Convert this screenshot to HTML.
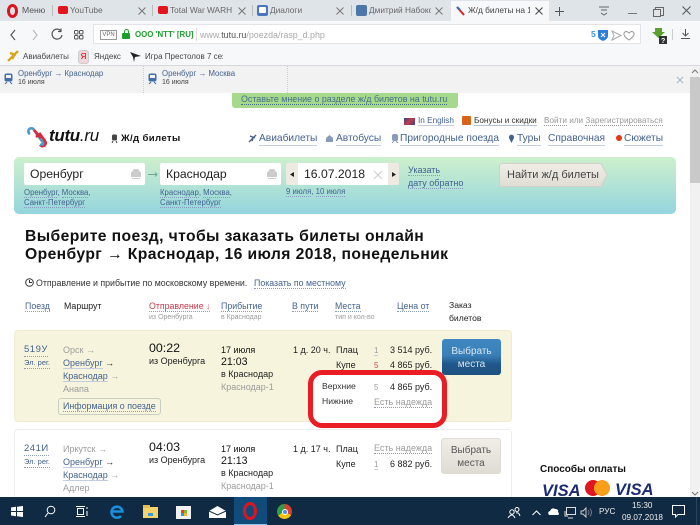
<!DOCTYPE html>
<html><head><meta charset="utf-8">
<style>
html,body{margin:0;padding:0;width:700px;height:525px;overflow:hidden;background:#fff}
body{position:relative;font-family:"Liberation Sans","Noto Sans CJK SC",sans-serif;font-size:10px;color:#222}
.a{position:absolute;white-space:nowrap;line-height:1.15}
.b{position:absolute}
.l{color:#44628f}
.u{border-bottom:1px solid #c3cde0}
.d{border-bottom:1px dotted #8a9dbd}
.g{color:#9c9c9c}
svg{position:absolute;overflow:visible}
</style></head><body>
<!-- chrome backgrounds -->
<div class="b" style="left:0;top:0;width:700px;height:21px;background:#dfe4e9"></div>
<div class="b" style="left:0;top:21px;width:700px;height:45px;background:#f7f8fa"></div>
<div class="b" style="left:0;top:65px;width:700px;height:1px;background:#d5d7da"></div>
<div class="b" style="left:451px;top:1px;width:98px;height:21px;background:#f7f8fa"></div>
<div class="b" style="left:93px;top:24px;width:548px;height:20px;background:#fff;border:1px solid #e2e4e7;box-sizing:border-box"></div>

<!-- tabs -->
<div class="b" style="left:7px;top:4px;border:3px solid #d8161e;border-radius:50%;width:5px;height:8px"></div>
<div class="a" style="left:22px;top:6px;font-size:8.6px;color:#555">Меню</div>
<div class="b" style="left:52px;top:5px;width:1px;height:11px;background:#bbb"></div>
<div class="b" style="left:58px;top:6px;width:10px;height:8px;background:#e4141e;border-radius:2px"></div>
<div class="a" style="left:70px;top:6px;font-size:8.3px;color:#666">YouTube</div>
<svg style="left:138px;top:7px" width="8" height="8" stroke="#777"><path d="M.5 .5L7.5 7.5M7.5 .5L.5 7.5"/></svg>
<div class="b" style="left:152px;top:5px;width:1px;height:11px;background:#bbb"></div>
<div class="b" style="left:158px;top:6px;width:10px;height:8px;background:#e4141e;border-radius:2px"></div>
<div class="a" style="left:170px;top:6px;font-size:8.3px;color:#666;width:62px;overflow:hidden">Total War WARHAMMER</div>
<svg style="left:238px;top:7px" width="8" height="8" stroke="#777"><path d="M.5 .5L7.5 7.5M7.5 .5L.5 7.5"/></svg>
<div class="b" style="left:252px;top:5px;width:1px;height:11px;background:#bbb"></div>
<div class="b" style="left:257px;top:5px;width:11px;height:11px;background:#4a76c0;border-radius:2px"></div>
<div class="b" style="left:259px;top:7px;width:7px;height:6px;background:#fff;border-radius:1px"></div>
<div class="a" style="left:270px;top:6px;font-size:8.3px;color:#666">Диалоги</div>
<svg style="left:336px;top:7px" width="8" height="8" stroke="#777"><path d="M.5 .5L7.5 7.5M7.5 .5L.5 7.5"/></svg>
<div class="b" style="left:351px;top:5px;width:1px;height:11px;background:#bbb"></div>
<div class="b" style="left:356px;top:5px;width:11px;height:11px;background:#4a76a8;border-radius:2px"></div>
<div class="a" style="left:369px;top:6px;font-size:8.3px;color:#666;width:62px;overflow:hidden">Дмитрий Набоков</div>
<svg style="left:435px;top:7px" width="8" height="8" stroke="#777"><path d="M.5 .5L7.5 7.5M7.5 .5L.5 7.5"/></svg>
<svg style="left:456px;top:6px" width="10" height="10"><path d="M1 1L8 9" stroke="#d22" stroke-width="2"/><path d="M1 1L4 4" stroke="#2a6ebb" stroke-width="2"/></svg>
<div class="a" style="left:468px;top:6px;font-size:8.3px;color:#444;width:62px;overflow:hidden">Ж/д билеты на 1</div>
<svg style="left:535px;top:7px" width="8" height="8" stroke="#444"><path d="M.5 .5L7.5 7.5M7.5 .5L.5 7.5"/></svg>
<svg style="left:555px;top:7px" width="9" height="9" stroke="#555"><path d="M4.5 0V9M0 4.5H9"/></svg>
<svg style="left:598px;top:6px" width="12" height="10"><path d="M1 1H11M3 4H9M3 7L6 9L9 7" stroke="#666" fill="none"/></svg>
<div class="b" style="left:628px;top:13px;width:9px;height:1px;background:#777"></div>
<div class="b" style="left:655px;top:7px;width:7px;height:7px;border:1px solid #666;background:#dfe4e9"></div>
<div class="b" style="left:653px;top:9px;width:6px;height:6px;border:1px solid #666;background:#dfe4e9"></div>
<svg style="left:682px;top:6px" width="9" height="9" stroke="#555"><path d="M.5 .5L8.5 8.5M8.5 .5L.5 8.5"/></svg>

<!-- toolbar -->
<svg style="left:10px;top:28px" width="60" height="14" fill="none" stroke="#555"><path d="M5 2L1 7L5 12" stroke-width="1.2"/><path d="M23 2L27 7L23 12" stroke="#bbb" stroke-width="1.2"/><path d="M51 3A5 5 0 1 0 52 7M51 .5V3.5H48" stroke-width="1.2"/></svg>
<svg style="left:74px;top:30px" width="10" height="10" fill="none" stroke="#555"><rect x=".5" y=".5" width="3.5" height="3.5" rx="1"/><rect x="5.5" y=".5" width="3.5" height="3.5" rx="1"/><rect x=".5" y="5.5" width="3.5" height="3.5" rx="1"/><rect x="5.5" y="5.5" width="3.5" height="3.5" rx="1"/></svg>
<div class="a" style="left:100px;top:30px;width:15px;height:8px;border:1px solid #999;font-size:6px;color:#666;text-align:center;line-height:8px">VPN</div>
<div class="b" style="left:122px;top:33px;width:8px;height:6px;background:#1a9e2c;border-radius:1px"></div>
<div class="b" style="left:123.5px;top:29px;width:3px;height:4px;border:1.2px solid #1a9e2c;border-bottom:0;border-radius:3px 3px 0 0"></div>
<div class="a" style="left:135px;top:30px;font-size:7.9px;font-weight:bold;color:#1f9e2f">ООО 'NTT' [RU]</div>
<div class="b" style="left:196px;top:28px;width:1px;height:13px;background:#ddd"></div>
<div class="a" style="left:200px;top:30px;font-size:8.9px;color:#aaa">www.<span style="color:#555">tutu.ru</span>/poezda/rasp_d.php</div>
<div class="a" style="left:591px;top:30px;font-size:8.5px;font-weight:bold;color:#3b99e0">5</div>
<svg style="left:597px;top:29px" width="12" height="12"><path d="M1 1H11V7Q11 10 6 12Q1 10 1 7Z" fill="#2b7de0"/><path d="M4 4L8 8M8 4L4 8" stroke="#fff"/></svg>
<svg style="left:611px;top:30px" width="25" height="11" fill="none" stroke="#aaa"><path d="M1 1L10 5.5L1 10L3 5.5Z"/><path d="M13 3Q15 0 18 3Q21 0 23 3Q24 6 18 10Q12 6 13 3Z" stroke="#999"/></svg>
<svg style="left:652px;top:27px" width="16" height="18"><path d="M3 1H10V5H13L6.5 11L0 5H3Z" fill="#5aa02c"/><rect x="7" y="9" width="8" height="8" fill="#333"/><text x="9" y="16" font-size="7" font-weight="bold" fill="#fff" font-family="Liberation Sans">?</text></svg>
<div class="b" style="left:672px;top:29px;width:1px;height:11px;background:#ccc"></div>
<svg style="left:680px;top:29px" width="11" height="11" fill="none" stroke="#555"><path d="M5.5 0V7M2.5 4L5.5 7L8.5 4M1 9.5H10"/></svg>

<!-- bookmarks -->
<svg style="left:7px;top:50px" width="12" height="12"><path d="M1 11L11 1M3 3L9 5M5 9L7 6" stroke="#d9a81c" stroke-width="2.4"/></svg>
<div class="a" style="left:23px;top:52px;font-size:8px;color:#444">Авиабилеты</div>
<div class="b" style="left:78px;top:50px;width:9px;height:12px;background:#f0d6d6;border:1px solid #ccc;border-radius:3px;color:#d00;font-size:8px;text-align:center;line-height:12px">Я</div>
<div class="a" style="left:94px;top:52px;font-size:8px;color:#444">Яндекс</div>
<svg style="left:130px;top:51px" width="11" height="11"><path d="M0 1L11 5L5 6L4 11L3 6Z" fill="#222"/></svg>
<div class="a" style="left:145px;top:52px;font-size:8px;color:#444;width:78px;overflow:hidden">Игра Престолов 7 сезон</div>

<!-- info bar -->
<div class="b" style="left:0;top:66px;width:690px;height:27px;background:#f2f2f2"></div>
<div class="b" style="left:143px;top:66px;width:0;height:27px;border-left:1px dotted #ccc"></div>
<div class="b" style="left:287px;top:66px;width:0;height:27px;border-left:1px dotted #ccc"></div>
<svg style="left:4px;top:73px" width="9" height="12"><rect x="0.5" y="0.5" width="8" height="8" rx="2" fill="#3f6ea8"/><rect x="2" y="2" width="5" height="3" fill="#f2f2f2"/><path d="M1 11L3 9M8 11L6 9" stroke="#3f6ea8"/></svg>
<svg style="left:148px;top:73px" width="9" height="12"><rect x="0.5" y="0.5" width="8" height="8" rx="2" fill="#3f6ea8"/><rect x="2" y="2" width="5" height="3" fill="#f2f2f2"/><path d="M1 11L3 9M8 11L6 9" stroke="#3f6ea8"/></svg>
<div class="a l" style="left:18px;top:70px;font-size:7.8px">Оренбург → Краснодар</div>
<div class="a" style="left:18px;top:79px;font-size:7px;color:#444">16 июля</div>
<div class="a l" style="left:162px;top:70px;font-size:7.8px">Оренбург → Москва</div>
<div class="a" style="left:162px;top:79px;font-size:7px;color:#444">16 июля</div>
<svg style="left:677px;top:77px" width="6" height="6" stroke="#9bb4cc"><path d="M0 0L6 6M6 0L0 6"/></svg>

<!-- scrollbar -->
<div class="b" style="left:690px;top:66px;width:10px;height:435px;background:#f1f1f1"></div>
<div class="b" style="left:690px;top:77px;width:10px;height:106px;background:#c9c9c9"></div>
<svg style="left:691px;top:69px" width="8" height="5" fill="none" stroke="#777"><path d="M1 4L4 1L7 4"/></svg>
<svg style="left:691px;top:491px" width="8" height="5" fill="none" stroke="#777"><path d="M1 1L4 4L7 1"/></svg>

<!-- feedback pill -->
<div class="b" style="left:232px;top:93px;width:226px;height:15px;background:#a6d98b;border-radius:0 0 3px 3px"></div>
<div class="a" style="left:241px;top:94px;font-size:8.9px;color:#44708a;border-bottom:1px dotted #44708a">Оставьте мнение о разделе ж/д билетов на tutu.ru</div>

<!-- logo -->
<svg style="left:27px;top:126px" width="22" height="22" fill="none" stroke-width="2.6"><path d="M3 8A3 3 0 1 1 7 4L17 18" stroke="#4a9cc4"/><path d="M7 4L14 12" stroke="#d82a3a"/><path d="M9 11L13 8L18 15A3 3 0 1 1 13 19" stroke="#d82a3a"/><path d="M13 19L17 18" stroke="#4a9cc4"/></svg>
<div class="a" style="left:49px;top:126px;font-size:17px;font-weight:bold;font-style:italic;color:#111;letter-spacing:-.3px">tutu<span style="font-weight:normal">.ru</span></div>
<svg style="left:111px;top:134px" width="7" height="10"><rect x="1" y="0.5" width="5" height="6" rx="1.5" fill="#444"/><path d="M1 9L2 7M6 9L5 7" stroke="#444"/></svg>
<div class="a" style="left:121px;top:133px;font-size:9.6px;font-weight:bold;color:#111;letter-spacing:.35px">Ж/д билеты</div>

<div class="b" style="left:404px;top:118px;width:11px;height:7px;background:linear-gradient(135deg,#2a4a8a,#c8384a 50%,#2a4a8a)"></div>
<div class="a l u" style="left:418px;top:116px;font-size:8.2px">In English</div>
<div class="b" style="left:462px;top:116px;width:9px;height:9px;background:#d8641a;border-radius:1px"></div>
<div class="a" style="left:474px;top:116px;font-size:8.2px;color:#333;border-bottom:1px solid #b8c4d8">Бонусы и скидки</div>
<div class="a" style="left:544px;top:116px;font-size:8.2px;color:#999"><span style="border-bottom:1px dotted #999">Войти</span> или <span style="border-bottom:1px dotted #999">Зарегистрироваться</span></div>

<svg style="left:248px;top:134px" width="9" height="9"><path d="M1 8L8 1M2 2L7 4M4 7L5 4" stroke="#44628f" stroke-width="1.4"/></svg>
<div class="a l u" style="left:259px;top:133px;font-size:10.2px">Авиабилеты</div>
<svg style="left:325px;top:134px" width="9" height="10"><path d="M1 4L4.5 1L8 4V8H1Z" fill="#889bb8"/></svg>
<div class="a l u" style="left:336px;top:133px;font-size:10.2px">Автобусы</div>
<svg style="left:391px;top:133px" width="8" height="11"><rect x="1" y="1" width="6" height="7" rx="2" fill="#889bb8"/><path d="M1 10L3 8M7 10L5 8" stroke="#889bb8"/></svg>
<div class="a l u" style="left:400px;top:133px;font-size:10.2px">Пригородные поезда</div>
<svg style="left:508px;top:134px" width="7" height="10"><path d="M3.5 9L1 4A2.6 2.6 0 1 1 6 4Z" fill="#44628f"/></svg>
<div class="a l u" style="left:517px;top:133px;font-size:10.2px">Туры</div>
<div class="a l u" style="left:548px;top:133px;font-size:10.2px">Справочная</div>
<div class="b" style="left:616px;top:135px;width:6px;height:6px;background:#e8350f;border-radius:50%"></div>
<div class="a l u" style="left:624px;top:133px;font-size:10.2px">Сюжеты</div>

<!-- search panel -->
<div class="b" style="left:14px;top:157px;width:662px;height:57px;background:linear-gradient(#cdf0cc,#95d5de);border-radius:5px"></div>
<div class="b" style="left:24px;top:163px;width:121px;height:22px;background:#fff;border-radius:2px"></div>
<div class="a" style="left:30px;top:167px;font-size:12.2px;color:#222">Оренбург</div>
<svg style="left:130px;top:168px" width="12" height="11"><path d="M4 1H8L11 5V9H1V5Z" fill="#ccc"/><path d="M2 10.5H10" stroke="#ccc"/></svg>
<svg style="left:148px;top:172px" width="10" height="5" fill="none" stroke="#6fa89a"><path d="M0 2.5H9M7 .5L9 2.5L7 4.5"/></svg>
<div class="b" style="left:160px;top:163px;width:121px;height:22px;background:#fff;border-radius:2px"></div>
<div class="a" style="left:166px;top:167px;font-size:12.2px;color:#222">Краснодар</div>
<svg style="left:266px;top:168px" width="12" height="11"><path d="M4 1H8L11 5V9H1V5Z" fill="#ccc"/><path d="M2 10.5H10" stroke="#ccc"/></svg>
<div class="a l" style="left:24px;top:188px;font-size:7.8px;line-height:10px"><span class="d">Оренбург</span>, <span class="d">Москва</span>,<br><span class="d">Санкт-Петербург</span></div>
<div class="a l" style="left:160px;top:188px;font-size:7.8px;line-height:10px"><span class="d">Краснодар</span>, <span class="d">Москва</span>,<br><span class="d">Санкт-Петербург</span></div>
<div class="a l" style="left:286px;top:188px;font-size:7.8px"><span class="d">9 июля</span>, <span class="d">10 июля</span></div>
<div class="b" style="left:286px;top:163px;width:12px;height:22px;background:#eeeae2;border-radius:2px 0 0 2px"></div>
<svg style="left:290px;top:172px" width="4" height="5"><path d="M4 0V5L0 2.5Z" fill="#222"/></svg>
<div class="b" style="left:298px;top:163px;width:90px;height:22px;background:#fff"></div>
<div class="a" style="left:304px;top:167px;font-size:12.2px;color:#222">16.07.2018</div>
<svg style="left:374px;top:171px" width="8" height="8" stroke="#ccc"><path d="M0 0L8 8M8 0L0 8"/></svg>
<div class="b" style="left:388px;top:163px;width:11px;height:22px;background:#eeeae2;border-radius:0 2px 2px 0"></div>
<svg style="left:392px;top:172px" width="4" height="5"><path d="M0 0V5L4 2.5Z" fill="#222"/></svg>
<div class="a l" style="left:408px;top:164px;font-size:9px;line-height:13px"><span class="d">Указать</span><br><span class="d">дату обратно</span></div>
<svg style="left:499px;top:163px" width="110" height="24"><defs><linearGradient id="bg" x1="0" y1="0" x2="0" y2="1"><stop offset="0" stop-color="#efede7"/><stop offset="1" stop-color="#e0ddd4"/></linearGradient></defs><path d="M3 .5H102L108 12L102 23.5H3Q.5 23.5 .5 21V3Q.5 .5 3 .5Z" fill="url(#bg)" stroke="#d4d0c8"/></svg>
<div class="a" style="left:507px;top:169px;font-size:11px;color:#444">Найти ж/д билеты</div>

<!-- headings -->
<div class="a" style="left:25px;top:228px;font-size:15.7px;font-weight:bold;color:#111;line-height:18px;letter-spacing:.39px">Выберите поезд, чтобы заказать билеты онлайн<br>Оренбург → Краснодар, 16 июля 2018, понедельник</div>
<svg style="left:25px;top:278px" width="9" height="9" fill="none" stroke="#333"><circle cx="4.5" cy="4.5" r="3.8"/><path d="M4.5 2V4.5H7"/></svg>
<div class="a" style="left:36px;top:278px;font-size:8.8px;color:#333">Отправление и прибытие по московскому времени.</div>
<div class="a l d" style="left:254px;top:278px;font-size:8.8px">Показать по местному</div>

<!-- table header -->
<div class="a l d" style="left:25px;top:301px;font-size:8.8px">Поезд</div>
<div class="a" style="left:64px;top:301px;font-size:8.8px;color:#222">Маршрут</div>
<div class="a d" style="left:149px;top:301px;font-size:8.8px;color:#c8384a">Отправление <span style="color:#d66">↓</span></div>
<div class="a l d" style="left:221px;top:301px;font-size:8.8px">Прибытие</div>
<div class="a l d" style="left:292px;top:301px;font-size:8.8px">В пути</div>
<div class="a l d" style="left:335px;top:301px;font-size:8.8px">Места</div>
<div class="a l d" style="left:397px;top:301px;font-size:8.8px">Цена от</div>
<div class="a" style="left:449px;top:299px;font-size:8.6px;color:#222;line-height:12.5px">Заказ<br>билетов</div>
<div class="a g" style="left:149px;top:314px;font-size:7px">из Оренбурга</div>
<div class="a g" style="left:221px;top:314px;font-size:7px">в Краснодар</div>
<div class="a g" style="left:335px;top:314px;font-size:7px">тип и кол-во</div>

<!-- row 1 -->
<div class="b" style="left:14px;top:330px;width:498px;height:92px;background:#f6f4dc;border:1px solid #eeecd6;border-radius:4px;box-sizing:border-box"></div>
<div class="a l d" style="left:24px;top:345px;font-size:9.5px;letter-spacing:.5px">519У</div>
<div class="a l d" style="left:24px;top:359px;font-size:7.5px">Эл. рег.</div>
<div class="a g" style="left:63px;top:345px;font-size:9px">Орск →</div>
<div class="a" style="left:63px;top:358px;font-size:9px"><span class="l u">Оренбург</span> →</div>
<div class="a g" style="left:63px;top:371px;font-size:9px"><span class="l u">Краснодар</span> →</div>
<div class="a g" style="left:63px;top:384px;font-size:9px">Анапа</div>
<div class="b" style="left:58px;top:398px;width:103px;height:17px;border:1px solid #c9cdc2;border-radius:3px;box-sizing:border-box"></div>
<div class="a l d" style="left:63px;top:401px;font-size:8.9px">Информация о поезде</div>
<div class="a" style="left:149px;top:341px;font-size:12.4px;color:#111">00:22</div>
<div class="a" style="left:149px;top:356px;font-size:9px;color:#222">из Оренбурга</div>
<div class="a" style="left:221px;top:345px;font-size:9px;color:#111">17 июля</div>
<div class="a" style="left:221px;top:356px;font-size:10.6px;color:#111">21:03</div>
<div class="a" style="left:221px;top:369px;font-size:9px;color:#222">в Краснодар</div>
<div class="a g" style="left:221px;top:382px;font-size:9px">Краснодар-1</div>
<div class="a" style="left:293px;top:345px;font-size:9px;color:#222">1 д. 20 ч.</div>
<div class="a" style="left:336px;top:345px;font-size:9px;color:#222">Плац</div>
<div class="a" style="left:336px;top:360px;font-size:9px;color:#222">Купе</div>
<div class="a g u" style="left:374px;top:346px;font-size:8px">1</div>
<div class="a" style="left:374px;top:361px;font-size:8px;color:#d44">5</div>
<div class="a" style="left:390px;top:345px;font-size:9px;color:#222">3 514 руб.</div>
<div class="a" style="left:390px;top:360px;font-size:9px;color:#222">4 865 руб.</div>
<div class="b" style="left:442px;top:339px;width:59px;height:36px;background:linear-gradient(#4088c2 0,#3a7fb8 45%,#20578a 70%,#1d5283);border-radius:3px"></div>
<div class="a" style="left:442px;top:345px;width:59px;text-align:center;font-size:10px;line-height:13px;color:#d8e6f2;white-space:normal">Выбрать места</div>

<!-- red highlight -->
<div class="b" style="left:308px;top:370px;width:139px;height:58px;background:#fff;border:5px solid #ea1c24;border-radius:14px;box-sizing:border-box"></div>
<div class="a" style="left:322px;top:382px;font-size:8.6px;color:#333">Верхние</div>
<div class="a" style="left:322px;top:397px;font-size:8.6px;color:#333">Нижние</div>
<div class="a g" style="left:374px;top:383px;font-size:8px">5</div>
<div class="a" style="left:390px;top:382px;font-size:9px;color:#222">4 865 руб.</div>
<div class="a g d" style="left:374px;top:397px;font-size:9px">Есть надежда</div>

<!-- row 2 -->
<div class="b" style="left:14px;top:429px;width:498px;height:80px;background:#fff;border:1px solid #eee;border-radius:4px;box-sizing:border-box"></div>
<div class="a l d" style="left:24px;top:444px;font-size:9.5px;letter-spacing:.5px">241И</div>
<div class="a l d" style="left:24px;top:458px;font-size:7.5px">Эл. рег.</div>
<div class="a g" style="left:63px;top:444px;font-size:9px">Иркутск →</div>
<div class="a" style="left:63px;top:457px;font-size:9px"><span class="l u">Оренбург</span> →</div>
<div class="a g" style="left:63px;top:470px;font-size:9px"><span class="l u">Краснодар</span> →</div>
<div class="a g" style="left:63px;top:483px;font-size:9px">Адлер</div>
<div class="a" style="left:149px;top:440px;font-size:12.4px;color:#111">04:03</div>
<div class="a" style="left:149px;top:455px;font-size:9px;color:#222">из Оренбурга</div>
<div class="a" style="left:221px;top:444px;font-size:9px;color:#111">17 июля</div>
<div class="a" style="left:221px;top:455px;font-size:10.6px;color:#111">21:13</div>
<div class="a" style="left:221px;top:468px;font-size:9px;color:#222">в Краснодар</div>
<div class="a g" style="left:221px;top:481px;font-size:9px">Краснодар-1</div>
<div class="a" style="left:293px;top:444px;font-size:9px;color:#222">1 д. 17 ч.</div>
<div class="a" style="left:336px;top:444px;font-size:9px;color:#222">Плац</div>
<div class="a" style="left:336px;top:459px;font-size:9px;color:#222">Купе</div>
<div class="a g d" style="left:374px;top:443px;font-size:9px">Есть надежда</div>
<div class="a g u" style="left:374px;top:460px;font-size:8px">1</div>
<div class="a" style="left:390px;top:459px;font-size:9px;color:#222">6 882 руб.</div>
<div class="b" style="left:441px;top:438px;width:60px;height:36px;background:linear-gradient(#f0eee8,#dedcd3);border:1px solid #dddbd2;border-radius:3px;box-sizing:border-box"></div>
<div class="a" style="left:441px;top:444px;width:60px;text-align:center;font-size:10px;line-height:13px;color:#555;white-space:normal">Выбрать места</div>

<!-- payment -->
<div class="a" style="left:540px;top:464px;font-size:10px;font-weight:bold;color:#111">Способы оплаты</div>
<div class="a" style="left:542px;top:482px;font-size:16.5px;font-weight:bold;font-style:italic;color:#1b2b72">VISA</div>
<div class="b" style="left:585px;top:480px;width:16px;height:16px;background:#e0171e;border-radius:50%"></div>
<div class="b" style="left:594px;top:480px;width:16px;height:16px;background:#f79e1b;border-radius:50%"></div>
<div class="a" style="left:615px;top:481px;font-size:16.5px;font-weight:bold;font-style:italic;color:#1b2b72">VISA</div>

<!-- taskbar -->
<div class="b" style="left:0;top:497px;width:700px;height:28px;background:#0f2a42"></div>
<svg style="left:11px;top:506px" width="12" height="11"><path d="M0 1.5L5 .8V5H0ZM6 .7L12 0V5H6ZM0 6H5V10.2L0 9.5ZM6 6H12V11L6 10.3Z" fill="#fff"/></svg>
<svg style="left:44px;top:505px" width="12" height="13" fill="none" stroke="#fff"><circle cx="7" cy="5" r="3.8"/><path d="M4 8L1 12"/></svg>
<svg style="left:76px;top:506px" width="12" height="11" fill="none" stroke="#fff"><rect x="1.5" y="2.5" width="6" height="6"/><path d="M0 .5H9M0 10.5H9M11 1V3M11 5V10"/></svg>
<svg style="left:110px;top:504px" width="14" height="14" fill="none" stroke="#1a8fe0" stroke-width="2.6"><path d="M2 7.5H12.5A5.5 5.5 0 1 0 11 12"/></svg>
<div class="b" style="left:143px;top:507px;width:15px;height:11px;background:#f5d36a"></div>
<div class="b" style="left:143px;top:505px;width:7px;height:3px;background:#e8bf4f"></div>
<div class="b" style="left:148px;top:513px;width:5px;height:3px;background:#3a9ad9"></div>
<div class="b" style="left:176px;top:506px;width:15px;height:13px;background:#f2f2f2"></div>
<div class="b" style="left:181px;top:510px;width:3px;height:3px;background:#e8431f"></div>
<div class="b" style="left:184px;top:510px;width:3px;height:3px;background:#7fbb2b"></div>
<div class="b" style="left:181px;top:513px;width:3px;height:3px;background:#2a9ae0"></div>
<div class="b" style="left:184px;top:513px;width:3px;height:3px;background:#f6b81f"></div>
<svg style="left:209px;top:506px" width="17" height="12"><path d="M0 5L8.5 0L17 5V12H0Z" fill="#fff"/><path d="M0 5L8.5 9L17 5" fill="none" stroke="#0f2a42"/></svg>
<div class="b" style="left:234px;top:497px;width:33px;height:28px;background:#0f4c7c"></div>
<div class="b" style="left:234px;top:524px;width:33px;height:1px;background:#8ec0e8"></div>
<div class="b" style="left:243px;top:502px;width:8px;height:12px;border:3px solid #e0141e;border-radius:50%"></div>
<div class="b" style="left:277px;top:504px;width:15px;height:15px;border-radius:50%;background:conic-gradient(#d9402f 0 33%,#f4c20d 33% 66%,#2f9e48 66%)"></div>
<div class="b" style="left:281.5px;top:508.5px;width:6px;height:6px;border-radius:50%;background:#4a8fe8;border:.5px solid #fff;box-sizing:border-box"></div>
<svg style="left:507px;top:506px" width="14" height="13" fill="none" stroke="#fff"><circle cx="5" cy="6" r="2.2"/><circle cx="10" cy="3.5" r="2"/><path d="M1 12Q5 6 8 12M9 7Q12 6 13 10"/></svg>
<svg style="left:532px;top:510px" width="9" height="6" fill="none" stroke="#fff"><path d="M.5 5L4.5 1L8.5 5"/></svg>
<svg style="left:547px;top:507px" width="13" height="9"><path d="M2 8Q0 5 3 4Q5 0 8 2Q12 2 11 5Q13 7 11 8Z" fill="#fff"/></svg>
<svg style="left:564px;top:507px" width="12" height="12" fill="none" stroke="#ddd"><rect x="2.5" y=".5" width="9" height="7"/><path d="M1 4V9H4M4 11H9"/></svg>
<svg style="left:580px;top:507px" width="13" height="11" fill="none" stroke="#ccc"><path d="M1 4H3L6 1V10L3 7H1Z"/><path d="M8 3Q10 5.5 8 8M10 1.5Q13 5.5 10 9.5" stroke="#778"/></svg>
<div class="a" style="left:599px;top:507px;font-size:8.2px;color:#eee">РУС</div>
<div class="a" style="left:632px;top:501px;font-size:8.2px;color:#eee">15:30</div>
<div class="a" style="left:622px;top:513px;font-size:8.2px;color:#eee">09.07.2018</div>
<svg style="left:672px;top:505px" width="13" height="13" fill="none" stroke="#fff"><path d="M.5 .5H12.5V9.5H6L3.5 12V9.5H.5Z"/></svg>
<div class="b" style="left:696px;top:497px;width:1px;height:28px;background:#2b465c"></div>
</body></html>
